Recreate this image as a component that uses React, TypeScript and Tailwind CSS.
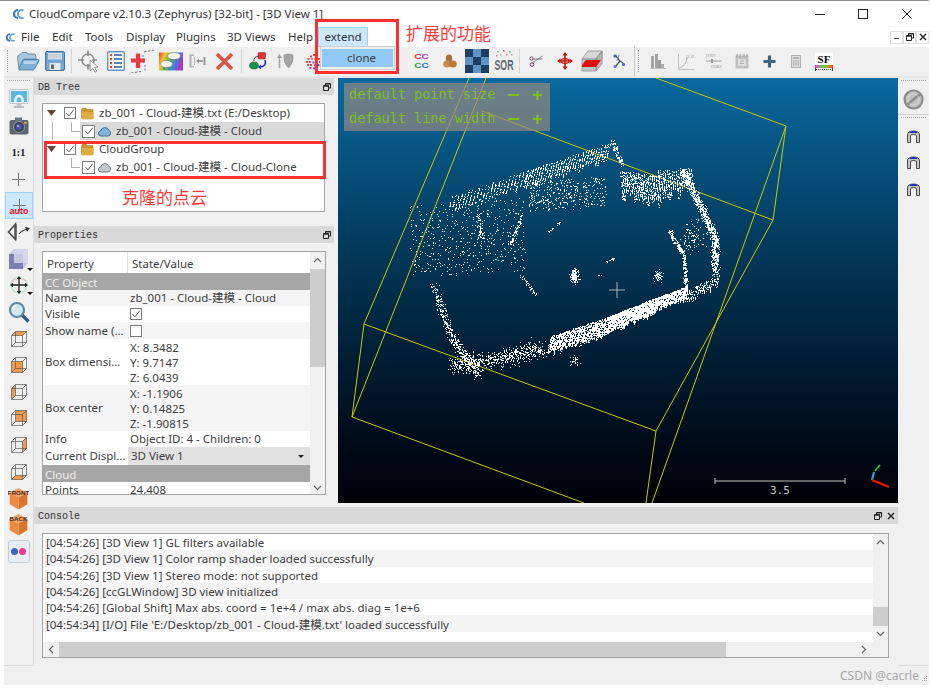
import { ReactNode } from 'react';

// ---- point cloud generated once from a seeded random, it's a drawing not data
let seed = 12345;
const rnd = () => {
  seed = (seed * 1664525 + 1013904223) % 4294967296;
  return seed / 4294967296;
};
const gauss = () => (rnd() + rnd() + rnd() - 1.5) / 1.5;

let cloud = '';
const pt = (x: number, y: number) => {
  cloud += `M${Math.round(x)} ${Math.round(y)}h1v1h-1z`;
};
const band = (poly: number[][], thick: number, n: number) => {
  for (let i = 0; i < n; i++) {
    const s = Math.floor(rnd() * (poly.length - 1));
    const t = rnd();
    const [ax, ay] = poly[s];
    const [bx, by] = poly[s + 1];
    pt(ax + (bx - ax) * t + gauss() * thick, ay + (by - ay) * t + gauss() * thick);
  }
};
const hatch = (x0: number, y0: number, x1: number, y1: number, len: number, step: number, dens: number, slant: number) => {
  const d = Math.hypot(x1 - x0, y1 - y0);
  for (let a = 0; a < d; a += step) {
    const x = x0 + ((x1 - x0) * a) / d;
    const y = y0 + ((y1 - y0) * a) / d;
    const l = len * (0.65 + rnd() * 0.35);
    for (let i = 0; i < l * dens; i++) {
      const k = rnd() * l;
      pt(x + slant * k + (rnd() - 0.5), y + k);
    }
  }
};
const blob = (cx: number, cy: number, rx: number, ry: number, n: number) => {
  for (let i = 0; i < n; i++) pt(cx + gauss() * rx, cy + gauss() * ry);
};
const scatter = (x0: number, x1: number, y0: number, y1: number, skew: number, n: number) => {
  for (let i = 0; i < n; i++) {
    const u = rnd();
    pt(x0 + (x1 - x0) * u, y0 + (y1 - y0) * rnd() - skew * u);
  }
};

// top wall
hatch(452, 196, 528, 170, 20, 3.6, 0.9, -0.25);
hatch(528, 170, 612, 142, 22, 2.8, 1.1, -0.25);
band([[612, 141], [622, 165]], 4, 90);
// top right block
hatch(620, 170, 658, 176, 34, 2, 1.2, 0.1);
hatch(658, 170, 692, 168, 30, 2.2, 1.1, 0.1);
// right edge
band([[683, 171], [700, 205], [715, 238], [715, 271]], 6, 850);
// bottom wall
hatch(551, 336, 610, 316, 22, 1.4, 1.5, -0.2);
hatch(610, 316, 660, 296, 20, 1.1, 2.2, -0.2);
hatch(660, 296, 688, 286, 15, 1.2, 2, -0.2);
hatch(685, 292, 719, 274, 15, 2.4, 0.9, -0.2);
// inner right arc
band([[669, 231], [684, 255], [686, 291]], 3, 280);
blob(692, 238, 16, 24, 90);
// inner blobs
blob(574, 275, 6, 11, 140);
blob(658, 276, 6, 8, 60);
band([[606, 262], [614, 258]], 1.2, 16);
band([[548, 232], [560, 222]], 1, 18);
band([[598, 275], [603, 274]], 0.6, 4);
// left scatter
scatter(410, 525, 205, 278, 8, 520);
scatter(528, 606, 182, 212, 6, 340);
band([[478, 215], [482, 240]], 3, 60);
band([[522, 215], [510, 245]], 3, 70);
band([[521, 275], [536, 295]], 3, 40);
band([[433, 285], [452, 338], [479, 375]], 7, 400);
band([[452, 365], [500, 358], [544, 348]], 13, 620);
blob(575, 360, 9, 8, 26);

// ---- little helpers
const Ico = ({ w = 22, h = 22, vb, children }: { w?: number; h?: number; vb?: string; children: ReactNode }) => (
  <svg width={w} height={h} viewBox={vb ?? `0 0 ${w} ${h}`} className="block">
    {children}
  </svg>
);

const Slot = ({ className, children }: { className: string; children?: ReactNode }) => (
  <div className={`flex shrink-0 items-center justify-center ${className}`}>{children}</div>
);

const ToolSep = ({ className }: { className: string }) => <div className={`h-[24px] w-px shrink-0 bg-[#d4d4d4] ${className}`} />;

const Check = ({ small }: { small?: boolean }) => (
  <div className={`flex shrink-0 items-center justify-center border border-[#7c7c7c] bg-white ${small ? 'h-[13px] w-[13px]' : 'h-[12px] w-[12px]'}`}>
    <svg width="10" height="10" viewBox="0 0 10 10">
      <path d="M1.5 5.2 4 7.8 8.7 1.8" fill="none" stroke="#5a5a5a" strokeWidth="1" />
    </svg>
  </div>
);

const Folder = () => (
  <Ico w={13} h={13}>
    <path d="M0.5 3 L1.5 1 H5 L6 2.5 H12 V11 Q12 12 11 12 H1.5 Q0.5 12 0.5 11Z" fill="#c9962e" stroke="#a8781c" strokeWidth="0.5" />
    <path d="M1 5 H12.5 V11 Q12.5 12 11 12 H2 Q1 12 1 11Z" fill="#e0ac42" />
  </Ico>
);

const CloudIcon = ({ blue }: { blue?: boolean }) => (
  <Ico w={13} h={11}>
    <path
      d="M3 10 Q0.3 10 0.5 7.2 Q0.7 5 2.7 5 Q3 2 6.5 1.6 Q10 1.4 10.8 4.3 Q12.8 5 12.6 7.4 Q12.3 10 9.8 10Z"
      fill={blue ? '#7fb4de' : '#c4c8cc'}
      stroke={blue ? '#33648e' : '#6a6e72'}
      strokeWidth="0.9"
    />
  </Ico>
);

const Triangle = () => (
  <svg width="9" height="6" viewBox="0 0 9 6" className="shrink-0">
    <path d="M0 0H9L4.5 6Z" fill="#66473a" />
  </svg>
);

const FloatBtn = () => (
  <svg width="8" height="8" viewBox="0 0 8 8" className="shrink-0">
    <path d="M2.5 2.5V0.5H7.5V5H5.5M0.5 2.5H5.5V7.5H0.5Z" fill="none" stroke="#222" strokeWidth="1" />
    <path d="M2.5 1H7.5M0.5 3.2H5.5" stroke="#222" strokeWidth="1" />
  </svg>
);

const CloseBtn = () => (
  <svg width="8" height="8" viewBox="0 0 8 8" className="shrink-0">
    <path d="M1 1 7 7M7 1 1 7" stroke="#222" strokeWidth="1.4" />
  </svg>
);

const Chevron = ({ dir }: { dir: 'up' | 'down' | 'left' | 'right' }) => {
  const d = { up: 'M1 6 4.5 2.5 8 6', down: 'M1 3 4.5 6.5 8 3', left: 'M6 1 2.5 4.5 6 8', right: 'M3 1 6.5 4.5 3 8' }[dir];
  return (
    <svg width="9" height="9" viewBox="0 0 9 9" className="shrink-0">
      <path d={d} fill="none" stroke="#666" strokeWidth="1.2" />
    </svg>
  );
};

const Handle = () => <div className="h-[1px] border-t border-dotted border-[#a8a8a8]" />;

const DockHeader = ({ title, close }: { title: string; close?: boolean }) => (
  <div className="flex h-[17px] items-center justify-between bg-[#d9d9d9] pl-[4px] pr-[3px] font-['Liberation_Mono',monospace] text-[10px] text-[#333]">
    <span className="pt-[2px]">{title}</span>
    <div className="flex items-center gap-[5px]">
      <FloatBtn />
      {close && <CloseBtn />}
    </div>
  </div>
);

// ---- top toolbar icons
const OpenFolder = () => (
  <Ico w={24} h={24}>
    <path d="M3 20 L1.5 8 Q1.5 6.5 3 6.5 L6 3.5 H11 L12 5 H19 L20 8 V10 H8 L4 20Z" fill="#a9c6de" stroke="#5c7d9c" strokeWidth="0.8" />
    <path d="M3.5 21 Q2.5 21 3 19.5 L7 10.5 H22 Q23.5 10.5 23 12 L18.5 20 Q18 21 16.5 21Z" fill="#7fb0d6" stroke="#4f7698" strokeWidth="0.8" />
    <path d="M8 12 H21 L19 15 H7Z" fill="#b7d4ea" />
  </Ico>
);
const Floppy = () => (
  <Ico w={20} h={20}>
    <rect x="0.5" y="0.5" width="19" height="19" rx="1.5" fill="#72a5cf" stroke="#4b6f8f" />
    <rect x="3" y="2" width="14" height="6.5" fill="#d5dde4" />
    <path d="M3 4H17M3 6.2H17" stroke="#b0bcc8" strokeWidth="0.7" />
    <rect x="4.5" y="12" width="11" height="7" fill="#e6e8ea" />
    <rect x="6" y="13.5" width="3" height="4.5" fill="#5d6a76" />
  </Ico>
);
const TargetIcon = () => (
  <Ico w={24} h={24}>
    <circle cx="11" cy="11" r="6" fill="none" stroke="#8b8b8b" strokeWidth="1.4" />
    <path d="M11 1.5V7M11 15V20.5M1 11H7M15 11H20" stroke="#8b8b8b" strokeWidth="1.6" />
    <path d="M13 11 L13 22 L15.8 19.6 L18 23.2 L19.8 22.2 L17.6 18.6 L21 18Z" fill="#f2f2f2" stroke="#8a8a8a" strokeWidth="0.9" />
  </Ico>
);
const ListIcon = () => (
  <Ico w={18} h={20}>
    <rect x="0.7" y="0.7" width="16.6" height="18.6" rx="1" fill="#fff" stroke="#6c93bd" strokeWidth="1.4" />
    {[4, 8, 12, 16].map(y => (
      <g key={y}>
        <rect x="3" y={y - 1} width="2.2" height="2.2" fill="#d24a3a" />
        <rect x="7" y={y - 0.8} width="8" height="1.6" fill="#3566a8" />
      </g>
    ))}
  </Ico>
);
const RedPlus = () => (
  <Ico w={24} h={24}>
    <path d="M0 24 L10 22.5 M13 3 L23 1" stroke="#777" strokeWidth="1" strokeDasharray="2.5 1.5" fill="none" />
    <path d="M12 6 V14 M14 16 V22" stroke="#5a78c4" strokeWidth="1" strokeDasharray="2 1.5" />
    <path d="M7 4.5V19M0 11.5H14" stroke="#ea3740" strokeWidth="4.2" />
  </Ico>
);
const RainbowSheep = () => (
  <Ico w={24} h={20}>
    <defs>
      <linearGradient id="rb" x1="0" y1="0" x2="1" y2="0.3">
        <stop offset="0" stopColor="#f0383a" />
        <stop offset="0.25" stopColor="#f5c52c" />
        <stop offset="0.5" stopColor="#4fc24a" />
        <stop offset="0.75" stopColor="#3a86e0" />
        <stop offset="1" stopColor="#a23cc6" />
      </linearGradient>
    </defs>
    <rect x="0" y="1.5" width="24" height="18" fill="url(#rb)" />
    <ellipse cx="15" cy="5" rx="6.5" ry="3.5" fill="#f5f5f0" stroke="#777" strokeWidth="0.5" />
    <ellipse cx="7.5" cy="13" rx="6" ry="3.5" fill="#f5f5f0" stroke="#777" strokeWidth="0.5" />
    <path d="M12 8V11M17 8V11M5 16V19M10 16V19" stroke="#666" strokeWidth="1" />
  </Ico>
);
const BoxArrow = () => (
  <Ico w={17} h={16}>
    <path d="M0.5 1.5H5V3H2.5V13H5V14.5H0.5Z M5 4H6V12H5Z" fill="#b0b0b0" />
    <path d="M15.5 4V12" stroke="#9a9a9a" strokeWidth="2" />
    <path d="M14 8H8.5" stroke="#8e8e8e" strokeWidth="1.6" />
    <path d="M7 8 10 5.5V10.5Z" fill="#8e8e8e" />
  </Ico>
);
const RedX = () => (
  <Ico w={19} h={19}>
    <path d="M2 2 17 17M17 2 2 17" stroke="#d65a47" strokeWidth="3.8" />
  </Ico>
);
const RegisterIcon = () => (
  <Ico w={19} h={19}>
    <rect x="9" y="0.5" width="7.5" height="6.5" rx="1" fill="#e23434" stroke="#8e1f1f" strokeWidth="0.5" />
    <ellipse cx="5" cy="13.5" rx="4.5" ry="3.6" fill="#1e8f46" stroke="#0f5f2d" strokeWidth="0.5" />
    <path d="M10 4 Q4 5 5 9" fill="none" stroke="#444" strokeWidth="1" />
    <path d="M16 8 Q18 15 10 15" fill="none" stroke="#2038d8" strokeWidth="1.6" />
    <path d="M9 15 12 12.6V17.4Z" fill="#2038d8" />
  </Ico>
);
const ShieldIcon = () => (
  <Ico w={18} h={16}>
    <path d="M2.5 3V15" stroke="#a8a8a8" strokeWidth="1.6" />
    <path d="M0 5 2.5 1 5 5Z" fill="#a0a0a0" />
    <path d="M7 2 Q11 0 16 2 Q17 9 11.5 15 Q6 9 7 2Z" fill="#a4a4a4" stroke="#8a8a8a" strokeWidth="0.6" />
  </Ico>
);
const DotsIcon = () => (
  <Ico w={16} h={17}>
    {[[8, 1, '#d33'], [11, 2, '#d33'], [5, 2.5, '#d33'], [13, 5, '#d33'], [2.5, 5, '#d33'], [6, 5, '#e66'], [9.5, 5, '#d33'], [1, 8, '#d33'], [4, 8, '#d33'], [7.5, 8.5, '#35c'], [11, 8, '#e66'], [14, 8, '#35c'], [2, 11, '#d33'], [5, 11, '#d33'], [9, 11.5, '#35c'], [12.5, 11, '#35c'], [4.5, 14, '#d33'], [8, 14.5, '#35c'], [11, 14, '#35c']].map(([x, y, c], i) => (
      <rect key={i} x={x as number} y={y as number} width="1.9" height="1.9" fill={c as string} />
    ))}
  </Ico>
);
const BrownBlob = () => (
  <Ico w={14} h={14}>
    <ellipse cx="6" cy="4.5" rx="3.2" ry="4" fill="#a8703a" />
    <ellipse cx="4" cy="10" rx="3.8" ry="3.6" fill="#d08a42" />
    <ellipse cx="10" cy="10" rx="3.8" ry="3.6" fill="#b87838" />
  </Ico>
);
const Checker = () => (
  <svg width="24" height="24" viewBox="0 0 3 3" className="block" shapeRendering="crispEdges">
    <rect width="3" height="3" fill="#1d3f62" />
    <path d="M1 0H2V1H1ZM0 1H1V2H0ZM2 1H3V2H2ZM1 2H2V3H1Z" fill="#5e93c8" />
  </svg>
);
const SorIcon = () => (
  <svg width="20" height="24" viewBox="0 0 20 24" className="block overflow-visible">
    {[[3, 2, '#7bb872'], [9, 1, '#b77'], [15, 2, '#7bb872'], [6, 5, '#aaa'], [12, 5, '#c88'], [17, 5, '#9c9'], [2, 6, '#c88']].map(([x, y, c], i) => (
      <rect key={i} x={x as number} y={y as number} width="1.6" height="1.6" fill={c as string} />
    ))}
    <text x="0.5" y="21" textLength="19" lengthAdjust="spacingAndGlyphs" fontFamily="'Liberation Sans',sans-serif" fontWeight="700" fontSize="15" fill="#606a70">
      SOR
    </text>
  </svg>
);
const Scissors = () => (
  <Ico w={14} h={12}>
    <path d="M13.5 1 3 8M13.5 4 4 4" stroke="#8a7a84" strokeWidth="1" fill="none" />
    <circle cx="3" cy="9.5" r="1.8" fill="none" stroke="#6e3a70" strokeWidth="1" />
    <circle cx="2.6" cy="3.6" r="1.6" fill="none" stroke="#6e3a70" strokeWidth="1" />
  </Ico>
);
const RedMove = () => (
  <Ico w={16} h={18}>
    <path d="M8 1V17M1 9H15" stroke="#c01818" strokeWidth="1.6" />
    <path d="M8 0 5.5 3.5H10.5ZM8 18 5.5 14.5H10.5ZM0 9 3.5 6.5V11.5ZM16 9 12.5 6.5V11.5Z" fill="#c01818" />
    <ellipse cx="8" cy="9" rx="4" ry="2.4" fill="none" stroke="#c01818" strokeWidth="1.2" />
  </Ico>
);
const RedBox = () => (
  <Ico w={22} h={22}>
    <path d="M1 9 7 1H21L15 9Z" fill="#d8d8d8" stroke="#909090" strokeWidth="0.8" />
    <path d="M15 9H21V1L15 9ZM15 9V21L21 14V1Z" fill="#bcbcbc" stroke="#909090" strokeWidth="0.8" />
    <path d="M1 9H15V21H1Z" fill="#c4c4c4" stroke="#909090" strokeWidth="0.8" />
    <path d="M1 15 5 10H20L15 17H1Z" fill="#e00d14" />
  </Ico>
);
const NodesIcon = () => (
  <Ico w={13} h={14}>
    <path d="M3 1 8 7 3 13M8 7 12 10" stroke="#3f4a6a" strokeWidth="1.2" fill="none" />
    <path d="M7 1 5 7" stroke="#7a86c0" strokeWidth="1" />
    <circle cx="3" cy="2" r="1.6" fill="#4a5ec8" />
    <circle cx="11.5" cy="10.5" r="1.6" fill="#5a6ed0" />
    <circle cx="3" cy="12.5" r="1.5" fill="#6a7ad0" />
  </Ico>
);
const HistIcon = () => (
  <Ico w={16} h={16}>
    <path d="M0.5 15.5H16" stroke="#c0c0c0" />
    <path d="M1 3H4V15H1ZM5 1H8V15H5Z" fill="#a4a4a4" />
    <path d="M8 7H11V15H8Z" fill="#9a9a9a" />
    <path d="M11 11H14V15H11Z" fill="#ababab" />
  </Ico>
);
const CurveIcon = () => (
  <Ico w={16} h={17}>
    <path d="M0.5 1V16.5H16" fill="none" stroke="#c0c0c0" />
    <path d="M1 15Q8 13 9 5" fill="none" stroke="#b4b4b4" />
    <text x="8" y="5" fontSize="6" fontFamily="'Liberation Sans',sans-serif" fill="#aaa">
      μ,σ
    </text>
  </Ico>
);
const MinMaxIcon = () => (
  <div className="flex w-[16px] flex-col items-center font-['Liberation_Sans',sans-serif] text-[6px] leading-[7px] text-[#a8a8a8]">
    <span className="self-start">min</span>
    <svg width="16" height="4" viewBox="0 0 16 4" className="block">
      <path d="M0 2H16" stroke="#a4a4a4" />
      <rect x="5" y="0" width="2" height="4" fill="#999" />
    </svg>
    <span className="self-end">max</span>
  </div>
);
const CalIcon = () => (
  <Ico w={14} h={15}>
    <rect x="0.5" y="1.5" width="13" height="13" fill="#c0c0c0" />
    <rect x="3" y="5" width="8" height="7" fill="#dedede" />
    <path d="M2 0V3M5 0V3M9 0V3M12 0V3" stroke="#999" />
    <path d="M5 7H9M5 9.5H9" stroke="#aaa" />
  </Ico>
);
const TealPlus = () => (
  <Ico w={13} h={13}>
    <path d="M6.5 0.5V12.5M0.5 6.5H12.5" stroke="#3f6378" strokeWidth="3.2" />
  </Ico>
);
const Calc = () => (
  <Ico w={10} h={13}>
    <rect x="0.5" y="0.5" width="9" height="12" fill="#dcdcdc" stroke="#b0b0b0" />
    <rect x="2" y="2" width="6" height="2" fill="#b4b4b4" />
    <path d="M2 6H3.5M4.3 6H5.8M6.5 6H8M2 8H3.5M4.3 8H5.8M6.5 8H8M2 10H3.5M4.3 10H5.8M6.5 10H8" stroke="#a0a0a0" />
  </Ico>
);
const SfIcon = () => (
  <div className="flex h-[17px] w-[18px] flex-col items-center bg-white">
    <span className="font-['Liberation_Serif',serif] text-[11px] font-bold leading-[12px] text-black">SF</span>
    <div className="h-[3px] w-full shrink-0 bg-linear-to-r from-[#e020c0] via-[#30d040] to-[#f03030]" />
    <div className="h-[2px] w-full shrink-0 border-x border-b border-dotted border-[#444]" />
  </div>
);

// ---- left toolbar icons
const MonitorIcon = () => (
  <Ico w={20} h={20}>
    <rect x="0.5" y="0.5" width="19" height="14" rx="1" fill="#e8eef2" stroke="#c0c8ce" />
    <rect x="2" y="2" width="16" height="11" fill="#5cb6e4" />
    <path d="M5 13Q5 6 10 5.5Q15 6 15 13H12.5Q12.5 8.5 10 8.2Q7.5 8.5 7.5 13Z" fill="#eaf5fb" />
    <rect x="7.5" y="15" width="5" height="2" fill="#c4c8cc" />
    <rect x="5" y="17" width="10" height="2" fill="#b8bcc0" />
  </Ico>
);
const CameraIcon = () => (
  <Ico w={20} h={18}>
    <rect x="0.5" y="3" width="19" height="14.5" rx="2" fill="#5c6670" />
    <rect x="6" y="0.5" width="7" height="3.5" fill="#6c7680" />
    <circle cx="10" cy="10" r="5.5" fill="#3c4650" stroke="#8f979f" />
    <circle cx="10" cy="10" r="3" fill="#4e52b8" />
    <circle cx="9" cy="9" r="1" fill="#b9bcff" />
    <rect x="15" y="5" width="3" height="1.6" fill="#e8a33a" />
  </Ico>
);
const Plus = () => (
  <Ico w={15} h={15}>
    <path d="M7.5 1V14M1 7.5H14" stroke="#777" strokeWidth="1" />
  </Ico>
);
const ConeIcon = () => (
  <Ico w={24} h={20}>
    <path d="M8.5 2 1.5 10 8.5 17.5 Z" fill="none" stroke="#444" strokeWidth="1.5" />
    <path d="M8.5 2V17.5" stroke="#555" strokeWidth="2.4" />
    <path d="M12 12 Q15 8 21 7" fill="none" stroke="#444" strokeWidth="1.2" />
    <path d="M23 6 18 5 20 10Z" fill="#333" />
  </Ico>
);
const PersCube = () => (
  <div className="relative">
    <Ico w={22} h={22}>
      <path d="M1 6 6 1H20V15L15 21H1Z" fill="#c8c8ea" />
      <path d="M1 6H15V21H1Z" fill="#7e7eb4" />
      <path d="M6 1H20V15H6Z" fill="#d8d8ee" opacity="0.8" />
    </Ico>
    <svg width="6" height="3" viewBox="0 0 6 3" className="absolute -bottom-[1px] -right-[3px]">
      <path d="M0 0H6L3 3Z" fill="#111" />
    </svg>
  </div>
);
const MoveIcon = () => (
  <div className="relative">
    <Ico w={20} h={20}>
      <circle cx="10" cy="10" r="8" fill="none" stroke="#b8e4c0" strokeWidth="1.2" />
      <path d="M3 6Q10 1 17 6" fill="none" stroke="#e8b8c8" strokeWidth="1.2" />
      <path d="M10 2V18M2 10H18" stroke="#222" strokeWidth="1.3" />
      <path d="M10 1 7.8 4H12.2ZM10 19 7.8 16H12.2ZM1 10 4 7.8V12.2ZM19 10 16 7.8V12.2Z" fill="#222" />
    </Ico>
    <svg width="6" height="3" viewBox="0 0 6 3" className="absolute bottom-[0px] -right-[4px]">
      <path d="M0 0H6L3 3Z" fill="#111" />
    </svg>
  </div>
);
const LoupeIcon = () => (
  <Ico w={22} h={22}>
    <path d="M14 14 20.5 20.5" stroke="#2d5a78" strokeWidth="3.2" />
    <circle cx="9" cy="9" r="7" fill="#cfe8f0" stroke="#5c8ca8" strokeWidth="2.2" />
    <path d="M4.5 8Q5 5 8 4.5" fill="none" stroke="#fff" strokeWidth="1.4" />
  </Ico>
);
const ViewCube = ({ face }: { face: string }) => (
  <Ico w={16} h={16}>
    <path d={face} fill="#f29a4a" />
    <path d="M0.5 4.5H11.5V15.5H0.5ZM4.5 0.5H15.5V11.5H4.5ZM0.5 4.5 4.5 0.5M11.5 4.5 15.5 0.5M0.5 15.5 4.5 11.5M11.5 15.5 15.5 11.5" fill="none" stroke="#5a5a5a" strokeWidth="0.7" />
  </Ico>
);
const OrangeCube = ({ label }: { label: string }) => (
  <svg width="21" height="23" viewBox="0 0 22 26" className="block">
    <path d="M11 1 21 6.5 11 12 1 6.5Z" fill="#f0a468" />
    <path d="M1 6.5 11 12V25.5L1 19.5Z" fill="#ed8a3f" />
    <path d="M21 6.5 11 12V25.5L21 19.5Z" fill="#d9752b" />
    <text x="11" y="8.5" textAnchor="middle" fontFamily="'Liberation Sans',sans-serif" fontWeight="700" fontSize="7" fill="#4a2a16">
      {label}
    </text>
  </svg>
);
const StereoBtn = () => (
  <div className="flex h-[23px] w-[22px] items-center justify-center gap-[1px] rounded-[3px] border border-[#c4ccd4] bg-[#e9eef3]">
    <div className="h-[7px] w-[7px] rounded-full bg-[#3a68c8]" />
    <div className="h-[7px] w-[7px] rounded-full bg-[#ec3a9a]" />
  </div>
);
const Blocked = () => (
  <Ico w={21} h={21}>
    <circle cx="10.5" cy="10.5" r="9" fill="#c2c2c2" stroke="#8c8c8c" strokeWidth="2.2" />
    <path d="M4.5 15.5 16.5 5.5" stroke="#8c8c8c" strokeWidth="2.4" />
    <circle cx="10.5" cy="10.5" r="5.5" fill="none" stroke="#e8e8e8" strokeWidth="1" opacity="0.5" />
  </Ico>
);
const Clip = () => (
  <Ico w={13} h={13}>
    <path d="M0.5 12.5V5Q0.5 1 6.5 1Q12.5 1 12.5 5V12.5H9.5V6Q9.5 4.5 6.5 4.5Q3.5 4.5 3.5 6V12.5Z" fill="#c4c4c4" stroke="#3c3c3c" strokeWidth="0.9" />
    <path d="M2.5 3Q3 1 6.5 1Q10 1 10.5 3Z" fill="#1c2fc0" />
  </Ico>
);

// ---- table rows
const Section = ({ label }: { label: string }) => (
  <div className="flex h-[17px] items-center bg-[#a6a6a6] pl-[2px] pt-[2px] text-[#ececec]">{label}</div>
);
const Row = ({ label, alt, h = 'h-[16px]', children }: { label: string; alt?: boolean; h?: string; children: ReactNode }) => (
  <div className={`flex items-center ${h} ${alt ? 'bg-[#f5f5f5]' : 'bg-white'}`}>
    <div className="w-[85px] shrink-0 overflow-hidden whitespace-nowrap pl-[2px]">{label}</div>
    <div className="flex-1 whitespace-nowrap pl-[2px]">{children}</div>
  </div>
);
const TreeLabel = ({ children }: { children: ReactNode }) => <span className="ml-[5px] whitespace-nowrap">{children}</span>;

const LOGS = [
  '[04:54:26] [3D View 1] GL filters available',
  '[04:54:26] [3D View 1] Color ramp shader loaded successfully',
  '[04:54:26] [3D View 1] Stereo mode: not supported',
  '[04:54:26] [ccGLWindow] 3D view initialized',
  '[04:54:26] [Global Shift] Max abs. coord = 1e+4 / max abs. diag = 1e+6',
  "[04:54:34] [I/O] File 'E:/Desktop/zb_001 - Cloud-建模.txt' loaded successfully",
];

const MENU = [
  ['File', 'w-[31px]'],
  ['Edit', 'w-[33px]'],
  ['Tools', 'w-[41px]'],
  ['Display', 'w-[50px]'],
  ['Plugins', 'w-[51px]'],
  ['3D Views', 'w-[61px]'],
  ['Help', 'w-[31px]'],
];

export default function App() {
  return (
    <div className="relative h-[690px] w-[932px] overflow-hidden bg-white font-['Noto_Sans','Noto_Sans_CJK_SC',sans-serif] text-[11.5px] text-[#404040]">
      {/* Title bar */}
      <div className="flex h-[27px] w-[929px] items-center border-t border-[#8f8f8f] pl-[12px] text-[11.5px] text-[#333]">
        <svg width="13" height="12" viewBox="0 0 13 12">
          <path d="M6 2A4 4 0 1 0 6 10" fill="none" stroke="#3a78b0" strokeWidth="2.2" />
          <path d="M11.5 2.4A4 4 0 1 0 11.5 9.6" fill="none" stroke="#6aa4d4" strokeWidth="2" />
        </svg>
        <span className="ml-[4px]">CloudCompare v2.10.3 (Zephyrus) [32-bit] - [3D View 1]</span>
        <div className="ml-auto flex items-center">
          <svg width="10" height="10" viewBox="0 0 10 10" className="mr-[33px]">
            <path d="M0 5.5H10" stroke="#222" />
          </svg>
          <svg width="10" height="10" viewBox="0 0 10 10" className="mr-[34px]">
            <rect x="0.5" y="0.5" width="9" height="9" fill="none" stroke="#222" />
          </svg>
          <svg width="10" height="10" viewBox="0 0 10 10" className="mr-[17px]">
            <path d="M0.5 0.5 9.5 9.5M9.5 0.5 0.5 9.5" stroke="#222" />
          </svg>
        </div>
      </div>

      {/* Menu bar */}
      <div className="flex h-[20px] w-[929px] items-center pl-[5px] text-[11.5px] text-[#333]">
        <svg width="11" height="11" viewBox="0 0 13 12" className="mr-[5px]">
          <path d="M6 2A4 4 0 1 0 6 10" fill="none" stroke="#3a78b0" strokeWidth="2.2" />
          <path d="M11.5 2.4A4 4 0 1 0 11.5 9.6" fill="none" stroke="#6aa4d4" strokeWidth="2" />
        </svg>
        {MENU.map(([m, w]) => (
          <span key={m} className={`${w} shrink-0 whitespace-nowrap`}>
            {m}
          </span>
        ))}
        <div className="ml-[-1px] flex h-[20px] w-[50px] items-center justify-center border border-[#99d1ff] bg-[#cce8ff]">extend</div>
        <div className="ml-auto mr-0 flex">
          {[0, 1, 2].map(i => (
            <div key={i} className="flex h-[13px] w-[13px] items-center justify-center border border-[#e0e0e0] bg-white">
              {i === 0 && <div className="mt-[3px] h-px w-[5px] bg-[#444]" />}
              {i === 1 && <FloatBtn />}
              {i === 2 && <CloseBtn />}
            </div>
          ))}
        </div>
      </div>

      {/* Main toolbar */}
      <div className="ml-[4px] flex h-[31px] w-[925px] items-center border-b-2 border-[#e6e6e6] bg-[#f0f0f0] pb-[1px]">
        <div className="ml-[3px] mr-[6px] h-[22px] w-[1px] shrink-0 border-l border-dotted border-[#aaa]" />
        <Slot className="w-[27px]"><OpenFolder /></Slot>
        <Slot className="w-[27px]"><Floppy /></Slot>
        <ToolSep className="mx-[3px]" />
        <Slot className="w-[27px]"><TargetIcon /></Slot>
        <Slot className="w-[27px]"><ListIcon /></Slot>
        <Slot className="w-[28px]"><RedPlus /></Slot>
        <Slot className="w-[27px]"><RainbowSheep /></Slot>
        <Slot className="w-[27px]"><BoxArrow /></Slot>
        <Slot className="w-[27px]"><RedX /></Slot>
        <ToolSep className="mx-[3px]" />
        <Slot className="w-[27px]"><RegisterIcon /></Slot>
        <Slot className="w-[27px]"><ShieldIcon /></Slot>
        <Slot className="w-[27px]"><DotsIcon /></Slot>
        <Slot className="w-[54px]" />
        <Slot className="w-[27px]" />
        <Slot className="w-[29px]">
          <div className="grid scale-y-[0.75] grid-cols-2 font-['Liberation_Sans',sans-serif] text-[10px] font-bold leading-[12px]">
            <span className="text-[#e03050]">C</span>
            <span className="text-[#b040c0]">C</span>
            <span className="text-[#30a050]">C</span>
            <span className="text-[#3070c0]">C</span>
          </div>
        </Slot>
        <Slot className="w-[27px]"><BrownBlob /></Slot>
        <Slot className="w-[28px]"><Checker /></Slot>
        <Slot className="w-[25px]"><SorIcon /></Slot>
        <ToolSep className="mx-[3px]" />
        <Slot className="w-[26px]"><Scissors /></Slot>
        <Slot className="w-[27px] ml-[2px]"><RedMove /></Slot>
        <Slot className="w-[27px]"><RedBox /></Slot>
        <Slot className="w-[27px]"><NodesIcon /></Slot>
        <div className="ml-[2px] mr-[3px] h-[30px] w-px shrink-0 bg-[#c8c8c8]" />
        <div className="mr-[5px] h-[22px] w-px shrink-0 border-l border-dotted border-[#aaa]" />
        <Slot className="w-[28px]"><HistIcon /></Slot>
        <Slot className="w-[28px]"><CurveIcon /></Slot>
        <Slot className="w-[28px]"><MinMaxIcon /></Slot>
        <Slot className="w-[28px]"><CalIcon /></Slot>
        <Slot className="w-[26px]"><TealPlus /></Slot>
        <Slot className="w-[28px]"><Calc /></Slot>
        <Slot className="w-[28px]"><SfIcon /></Slot>
      </div>

      {/* Main area */}
      <div className="ml-[4px] flex h-[588px] w-[925px] bg-[#f0f0f0]">
        {/* Left toolbar */}
        <div className="flex w-[30px] shrink-0 flex-col items-stretch border-b border-r border-[#dcdcdc] pt-[2px]">
          <div className="mx-[3px] mb-[5px]"><Handle /></div>
          <div className="flex flex-col">
            <Slot className="h-[26.6px]"><MonitorIcon /></Slot>
            <Slot className="h-[26.6px]"><CameraIcon /></Slot>
            <Slot className="h-[26.6px]">
              <span className="font-['Liberation_Serif',serif] text-[10px] font-bold text-[#111]">1:1</span>
            </Slot>
            <Slot className="h-[26.6px]"><Plus /></Slot>
            <Slot className="h-[26.6px] border border-[#99d1ff] bg-[#cce8ff] ml-px mr-0">
              <div className="relative flex flex-col items-center">
                <Plus />
                <span className="absolute top-[9px] font-['Liberation_Sans',sans-serif] text-[9px] font-bold leading-[9px] text-[#e01020]">auto</span>
              </div>
            </Slot>
            <Slot className="h-[26.6px]"><ConeIcon /></Slot>
            <Slot className="h-[26.6px]"><PersCube /></Slot>
            <Slot className="h-[26.6px]"><MoveIcon /></Slot>
            <Slot className="h-[26.6px]"><LoupeIcon /></Slot>
            <Slot className="h-[26.6px]"><ViewCube face="M4.5 0.5H15.5L11.5 4.5H0.5Z" /></Slot>
            <Slot className="h-[26.6px]"><ViewCube face="M0.5 4.5H11.5V15.5H0.5Z" /></Slot>
            <Slot className="h-[26.6px]"><ViewCube face="M0.5 4.5 4.5 0.5V11.5L0.5 15.5Z" /></Slot>
            <Slot className="h-[26.6px]"><ViewCube face="M4.5 0.5H15.5V11.5H4.5Z" /></Slot>
            <Slot className="h-[26.6px]"><ViewCube face="M11.5 4.5 15.5 0.5V11.5L11.5 15.5Z" /></Slot>
            <Slot className="h-[26.6px]"><ViewCube face="M4.5 11.5H15.5L11.5 15.5H0.5Z" /></Slot>
            <Slot className="h-[26.6px]"><OrangeCube label="FRONT" /></Slot>
            <Slot className="h-[26.6px]"><OrangeCube label="BACK" /></Slot>
            <Slot className="h-[26.6px]"><StereoBtn /></Slot>
          </div>
        </div>

        {/* Center */}
        <div className="flex w-[864px] shrink-0 flex-col">
          <div className="flex h-[425px]">
            {/* Docks */}
            <div className="w-[300px] shrink-0">
              <DockHeader title="DB Tree" />
              <div className="ml-[8px] mt-[8px] h-[109px] w-[283px] border border-[#a4a4a4] bg-white">
                <div className="flex h-[18px] items-center pl-[4px]">
                  <Triangle />
                  <div className="ml-[8px]"><Check /></div>
                  <div className="ml-[5px]"><Folder /></div>
                  <TreeLabel>zb_001 - Cloud-建模.txt (E:/Desktop)</TreeLabel>
                </div>
                <div className="flex h-[18px]">
                  <div className="ml-[9px] h-full w-px bg-[#bdb6b0]" />
                  <div className="ml-[18px] h-[10px] w-[9px] border-b border-l border-[#b0b0b0]" />
                  <div className="flex flex-1 items-center bg-[#d9d9d9] pl-[2px]">
                    <Check small />
                    <div className="ml-[3px]"><CloudIcon blue /></div>
                    <TreeLabel>zb_001 - Cloud-建模 - Cloud</TreeLabel>
                  </div>
                </div>
                <div className="flex h-[18px] items-center pl-[4px]">
                  <Triangle />
                  <div className="ml-[8px]"><Check /></div>
                  <div className="ml-[5px]"><Folder /></div>
                  <TreeLabel>CloudGroup</TreeLabel>
                </div>
                <div className="flex h-[18px]">
                  <div className="ml-[28px] h-[10px] w-[9px] border-b border-l border-[#b0b0b0]" />
                  <div className="flex flex-1 items-center pl-[2px]">
                    <Check small />
                    <div className="ml-[3px]"><CloudIcon /></div>
                    <TreeLabel>zb_001 - Cloud-建模 - Cloud-Clone</TreeLabel>
                  </div>
                </div>
              </div>

              <div className="mt-[14px]">
                <DockHeader title="Properties" />
              </div>
              <div className="ml-[8px] mt-[8px] flex h-[244px] w-[284px] overflow-hidden border border-[#a4a4a4] bg-white">
                <div className="w-[267px] shrink-0">
                  <div className="flex h-[21px] items-center bg-white">
                    <div className="flex h-full w-[85px] items-center border-r border-[#e4e4e4] pl-[4px] pt-[2px]">Property</div>
                    <div className="pl-[4px] pt-[2px]">State/Value</div>
                  </div>
                  <Section label="CC Object" />
                  <Row label="Name" alt>zb_001 - Cloud-建模 - Cloud</Row>
                  <Row label="Visible"><Check /></Row>
                  <Row label="Show name (..." alt h="h-[17px]">
                    <div className="h-[12px] w-[12px] border border-[#7c7c7c] bg-white" />
                  </Row>
                  <Row label="Box dimensi..." h="h-[46px]">
                    <div className="leading-[15px]">X: 8.3482<br />Y: 9.7147<br />Z: 6.0439</div>
                  </Row>
                  <Row label="Box center" alt h="h-[46px]">
                    <div className="leading-[15px]">X: -1.1906<br />Y: 0.14825<br />Z: -1.90815</div>
                  </Row>
                  <Row label="Info">Object ID: 4 - Children: 0</Row>
                  <div className="flex h-[18px] items-center bg-white">
                    <div className="w-[85px] shrink-0 overflow-hidden whitespace-nowrap pl-[2px]">Current Displ...</div>
                    <div className="flex h-full flex-1 items-center justify-between bg-[#e1e1e1] pl-[3px] pr-[6px]">
                      <span>3D View 1</span>
                      <svg width="6" height="3" viewBox="0 0 6 3">
                        <path d="M0 0H6L3 3Z" fill="#222" />
                      </svg>
                    </div>
                  </div>
                  <Section label="Cloud" />
                  <Row label="Points">24,408</Row>
                </div>
                <div className="flex w-[15px] shrink-0 flex-col bg-[#f0f0f0]">
                  <div className="flex h-[17px] items-center justify-center"><Chevron dir="up" /></div>
                  <div className="h-[98px] bg-[#cdcdcd]" />
                  <div className="flex-1" />
                  <div className="flex h-[14px] items-center justify-center"><Chevron dir="down" /></div>
                </div>
              </div>
            </div>

            {/* 3D view */}
            <div className="relative ml-[4px] flex-1 bg-linear-to-b from-[#0a699f] to-[#000207]">
              <svg width="560" height="425" viewBox="338 78 560 425" className="absolute inset-0">
                <path
                  d="M364 324 469 78M352 417 486 78M656 78 786 126 773 220 482 111M364 324 656 431 773 220M364 324 352 417 584 503M656 431 646 503M786 126 652 503"
                  fill="none"
                  stroke="#c9c900"
                  strokeWidth="1"
                />
                <path d={cloud} fill="#fff" shapeRendering="crispEdges" />
                <path d="M617 282V298M609 290H625" stroke="#a8b0b4" strokeWidth="1" />
                <path d="M715 481H845M715 478V484M845 478V484" stroke="#c4c4c4" strokeWidth="1" fill="none" />
                <path d="M875 471 880 465" stroke="#10e030" strokeWidth="1.6" />
                <path d="M872 480 874 472" stroke="#20b0e8" strokeWidth="2" />
                <path d="M872 480 889 487" stroke="#f01010" strokeWidth="2" />
              </svg>
              <span className="absolute left-[432px] top-[405px] font-['DejaVu_Sans_Mono',monospace] text-[11px] text-[#c8c8c8]">3.5</span>
              <div className="absolute left-[6px] top-[5px] flex h-[48px] w-[206px] flex-col justify-around bg-[#948a80]/70 px-[5px] font-['DejaVu_Sans_Mono',monospace] text-[13.5px] leading-none text-[#82bd1f]">
                {['default point size', 'default line width'].map(t => (
                  <div key={t} className="flex items-center">
                    <span className="w-[159px] whitespace-nowrap">{t}</span>
                    <div className="h-[2px] w-[11px] bg-[#82bd1f]" />
                    <span className="ml-[13px] font-['Liberation_Sans',sans-serif] text-[18px] font-bold leading-none">+</span>
                  </div>
                ))}
              </div>
            </div>
          </div>

          {/* Console */}
          <div className="mt-[4px]">
            <DockHeader title="Console" close />
          </div>
          <div className="ml-[8px] mt-[9px] flex h-[125px] w-[847px] flex-col overflow-hidden border border-[#a4a4a4] bg-white">
            <div className="flex h-[108px] shrink-0">
              <div className="w-[830px] shrink-0">
                {LOGS.map((l, i) => (
                  <div key={l} className={`flex h-[16.3px] items-center whitespace-nowrap pl-[3px] pt-px ${i % 2 ? 'bg-[#f4f4f4]' : 'bg-white'}`}>
                    {l}
                  </div>
                ))}
              </div>
              <div className="flex w-[15px] shrink-0 flex-col bg-[#f0f0f0]">
                <div className="flex h-[16px] items-center justify-center"><Chevron dir="up" /></div>
                <div className="mt-[57px] h-[19px] bg-[#cdcdcd]" />
                <div className="flex h-[14px] items-center justify-center"><Chevron dir="down" /></div>
              </div>
            </div>
            <div className="flex h-[15px] items-center bg-[#f0f0f0]">
              <div className="flex w-[16px] items-center justify-center"><Chevron dir="left" /></div>
              <div className="h-full w-[667px] bg-[#cdcdcd]" />
              <div className="ml-auto mr-[20px]"><Chevron dir="right" /></div>
            </div>
          </div>
        </div>

        {/* Right toolbar */}
        <div className="flex w-[31px] shrink-0 flex-col border-b border-[#dcdcdc] pt-[2px]">
          <div className="mx-[3px]"><Handle /></div>
          <Slot className="mt-[8px] h-[21px]"><Blocked /></Slot>
          <div className="mt-[4px] h-px bg-[#cfcfcf]" />
          <div className="mx-[3px] mt-[2px]"><Handle /></div>
          <Slot className="mt-[5px] h-[26.5px]"><Clip /></Slot>
          <Slot className="h-[26.5px]"><Clip /></Slot>
          <Slot className="h-[26.5px]"><Clip /></Slot>
        </div>
      </div>

      {/* Status bar */}
      <div className="ml-[4px] flex h-[19px] w-[925px] items-center justify-end bg-[#f0f0f0] pr-[2px]">
        <span className="mr-[3px] text-[12px] text-[#a8a8a8]">CSDN @cacrle</span>
        <div className="mt-[6px] grid grid-cols-3 gap-px">
          {[0, 0, 1, 0, 1, 1, 1, 1, 1].map((on, i) => (
            <div key={i} className={`h-px w-px ${on ? 'bg-[#b0b0b0]' : ''}`} />
          ))}
        </div>
      </div>

      {/* extend dropdown */}
      <div className="absolute left-[320px] top-[46px] flex h-[24px] w-[75px] items-center justify-center border border-[#cfcfcf] bg-[#f0f0f0] p-[1px]">
        <div className="flex h-[18px] w-full items-center justify-center bg-[#90c8f6] pl-[8px] text-[11.5px]">clone</div>
      </div>

      {/* Red annotations from the blog author */}
      <div className="pointer-events-none absolute left-[315px] top-[19px] h-[55px] w-[84px] border-[3px] border-[#ff3030]" />
      <span className="absolute left-[406px] top-[21px] font-['Noto_Sans_CJK_SC',sans-serif] text-[17px] leading-[24px] text-[#ff3a3a]">扩展的功能</span>
      <div className="pointer-events-none absolute left-[44px] top-[141px] h-[38px] w-[282px] border-[3px] border-[#ff3030]" />
      <span className="absolute left-[122px] top-[185px] font-['Noto_Sans_CJK_SC',sans-serif] text-[17px] leading-[24px] text-[#ff3a3a]">克隆的点云</span>
    </div>
  );
}
